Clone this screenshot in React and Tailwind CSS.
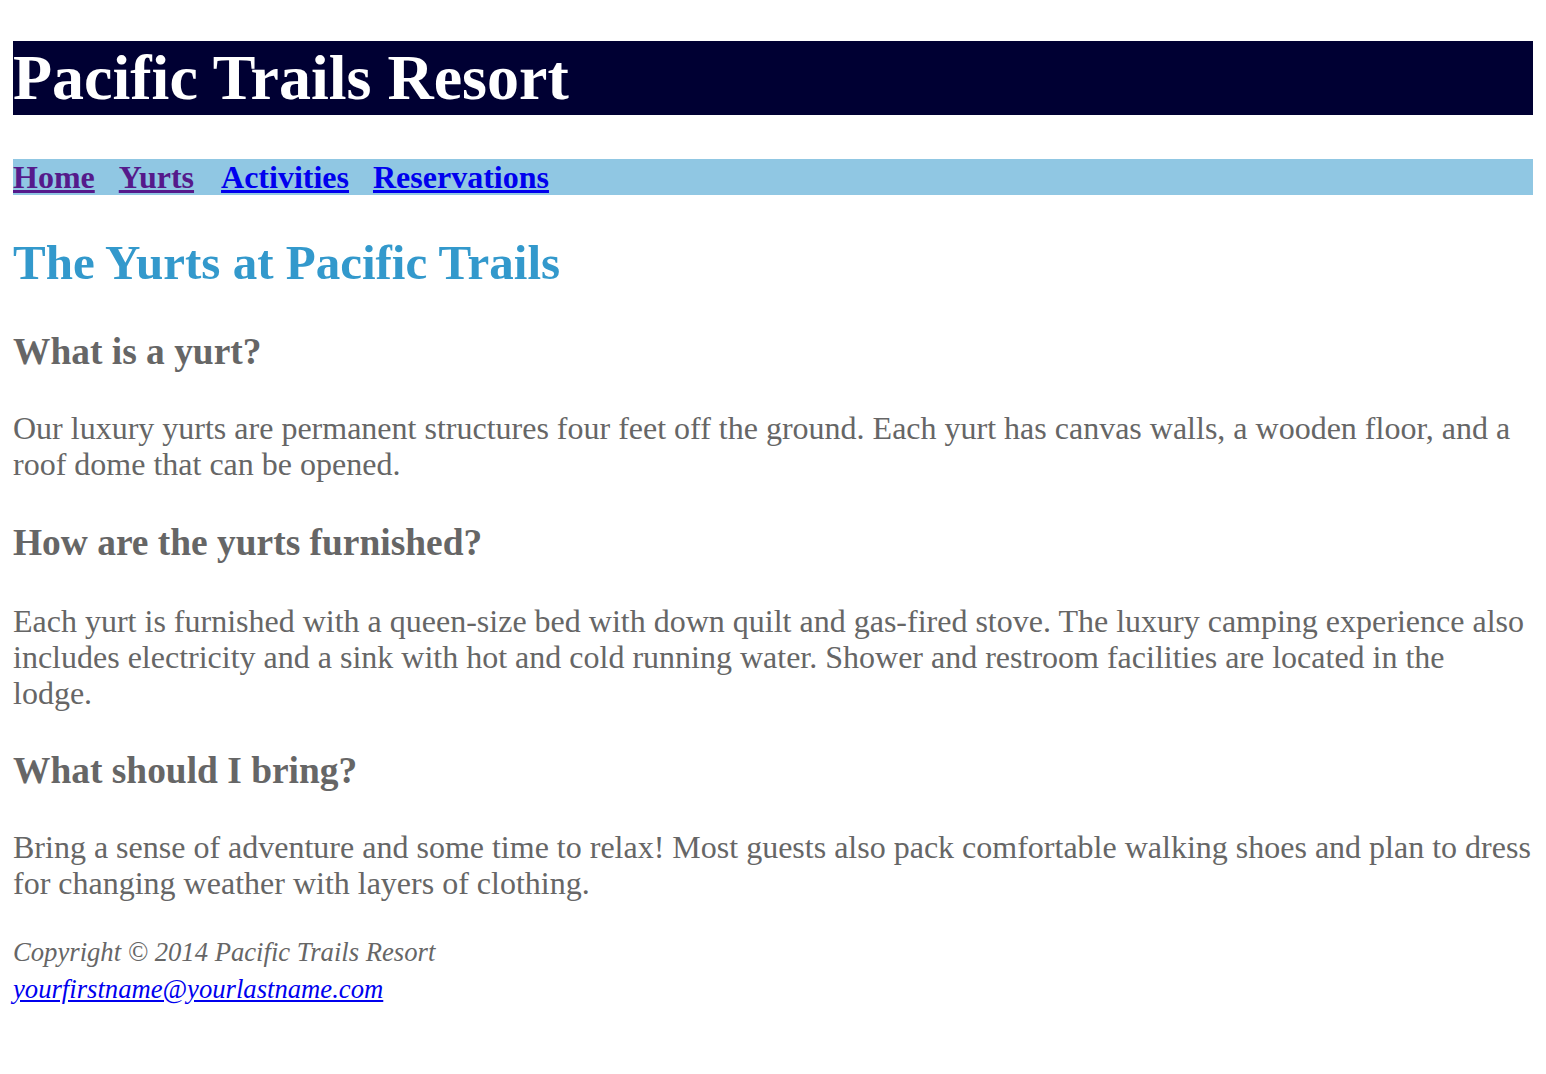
import React from 'react';

const navLinks = [
  { label: 'Home', visited: true, extra: '' },
  { label: 'Yurts', visited: true, extra: '' },
  { label: 'Activities', visited: false, extra: 'ml-[3px]' },
  { label: 'Reservations', visited: false, extra: '' },
];

function App() {
  return (
    <div className="min-h-screen bg-white px-[13px] pt-[41px] pb-[40px] font-['Liberation_Serif',_'Times_New_Roman',_serif] text-[32px] leading-[36px]">
      {/* Header */}
      <header>
        <h1 className="bg-[#000033] text-white text-[64px] leading-[74px] h-[74px] font-bold">
          Pacific Trails Resort
        </h1>
      </header>

      {/* Nav */}
      <nav className="mt-[44px] bg-[#90c7e3] h-[36px] flex gap-[24px] font-bold leading-[36px]">
        {navLinks.map((link) => (
          <a
            key={link.label}
            href="#"
            className={`underline ${link.extra} ${link.visited ? 'text-[#551a8b]' : 'text-[#0000ee]'}`}
          >
            {link.label}
          </a>
        ))}
      </nav>

      <main>
        <h2 className="mt-[40px] text-[49px] leading-[55px] font-bold text-[#3399cc]">
          The Yurts at Pacific Trails
        </h2>

        <h3 className="mt-[40px] text-[37.44px] leading-[43px] font-bold text-[#666666]">What is a yurt?</h3>
        <p className="mt-[37px] text-[#666666]">
          Our luxury yurts are permanent structures four feet off the ground. Each yurt has canvas walls, a wooden floor, and a roof dome that can be opened.
        </p>

        <h3 className="mt-[39px] text-[37.44px] leading-[43px] font-bold text-[#666666]">How are the yurts furnished?</h3>
        <p className="mt-[39px] text-[#666666]">
          Each yurt is furnished with a queen-size bed with down quilt and gas-fired stove. The luxury camping experience also includes electricity and a sink with hot and cold running water. Shower and restroom facilities are located in the<br />lodge.
        </p>

        <h3 className="mt-[38px] text-[37.44px] leading-[43px] font-bold text-[#666666]">What should I bring?</h3>
        <p className="mt-[37px] text-[#666666]">
          Bring a sense of adventure and some time to relax! Most guests also pack comfortable walking shoes and plan to dress for changing weather with layers of clothing.
        </p>
      </main>

      {/* Footer */}
      <footer className="mt-[33px] leading-[37px] text-[26.67px] italic text-[#666666]">
        <div>Copyright &copy; 2014 Pacific Trails Resort</div>
        <a href="#" className="text-[#0000ee] underline">yourfirstname@yourlastname.com</a>
      </footer>
    </div>
  );
}

export default App;
